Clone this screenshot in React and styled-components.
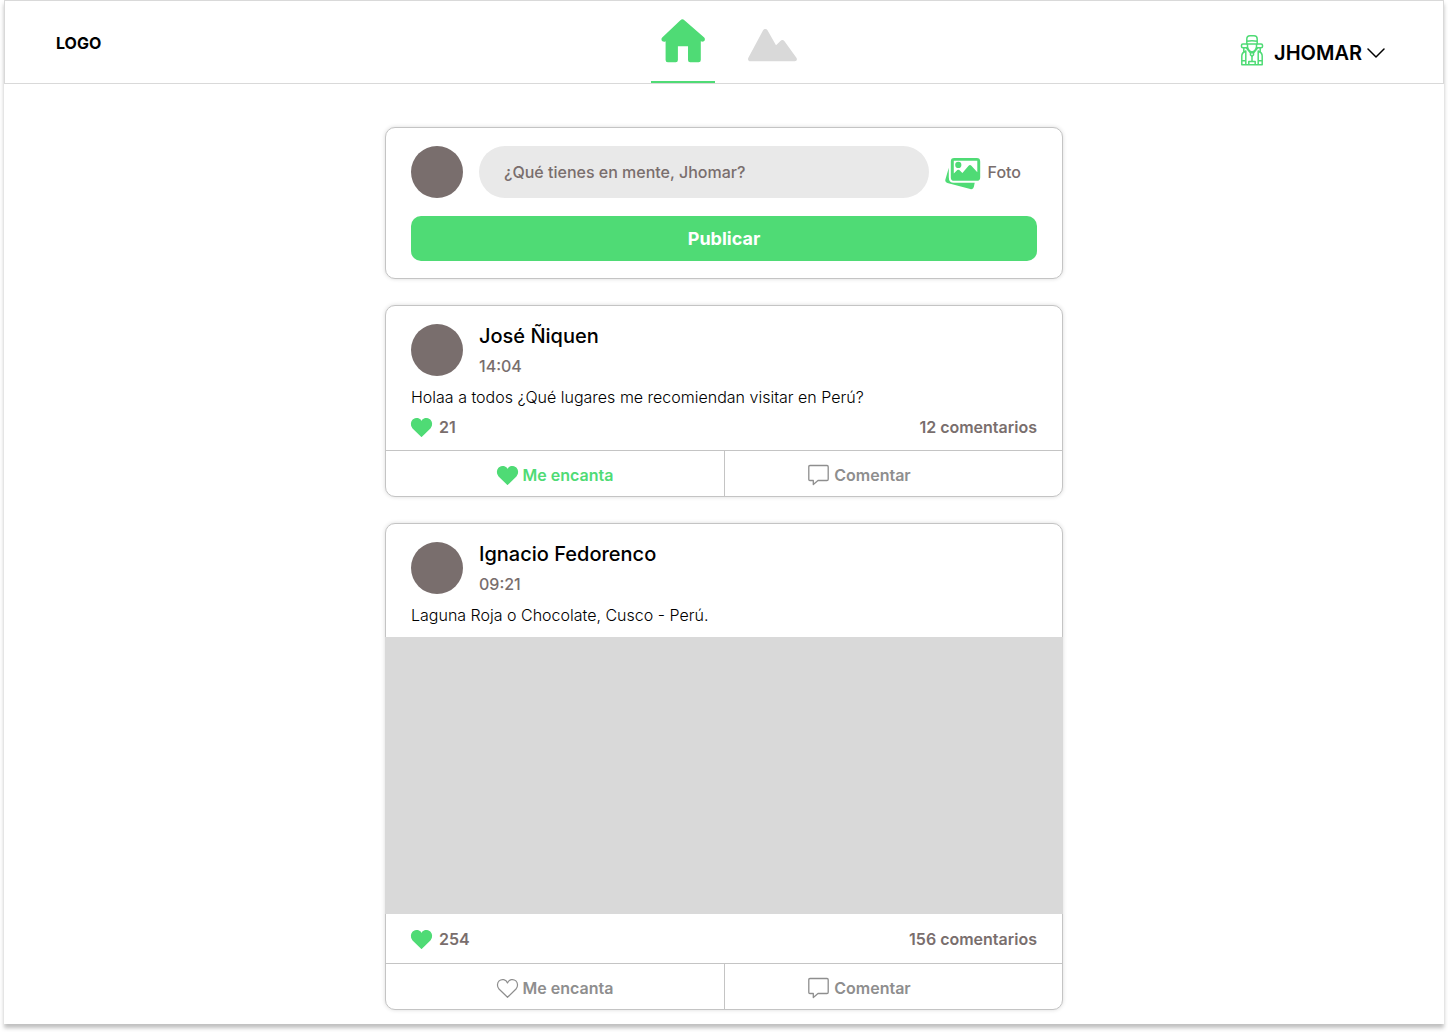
import React from "react";
import styled, { createGlobalStyle } from "styled-components";

const green = "#4fdb75";
const taupe = "#796e6d";
const line = "#c4c4c4";
const soft = "#d9d9d9";

const GlobalStyle = createGlobalStyle`
  *, *::before, *::after { box-sizing: border-box; }
  body { margin: 0; background: #fff; }
  body, button, input { font-family: Inter, "Liberation Sans", sans-serif; }
  h1, h2, p { margin: 0; }
  button { border: 0; background: none; padding: 0; cursor: pointer; }
  svg { display: block; flex: none; }
`;

const Screen = styled.div`
  padding: 0 4px 8px;
`;

const Page = styled.div`
  min-height: calc(100vh - 8px);
  background: #fff;
  box-shadow: 0 4px 4px rgba(0, 0, 0, 0.25);
`;

const Header = styled.header`
  display: grid;
  grid-template-columns: 1fr auto 1fr;
  height: 84px;
  padding: 0 51px;
  border: 1px solid ${soft};
`;

const Logo = styled.a`
  align-self: center;
  justify-self: start;
  padding-top: 2px;
  color: #000;
  font-size: 16px;
  font-weight: 700;
  line-height: 24px;
  text-decoration: none;
`;

const Nav = styled.nav`
  display: flex;
  gap: 33px;
`;

const NavLink = styled.a`
  display: flex;
  justify-content: center;
  padding-top: 16px;
  width: ${(p) => (p.$active ? "64px" : "49px")};
  border-bottom: 2px solid ${(p) => (p.$active ? green : "transparent")};
`;

const MountainSlot = styled.span`
  display: flex;
  align-items: flex-end;
  height: 45px;
`;

const UserMenu = styled.button`
  display: flex;
  align-items: center;
  justify-self: end;
  align-self: end;
  gap: 5px;
  margin: 0 7px 13px 0;
  color: #000;
  font-size: 20px;
  font-weight: 600;
  line-height: 32px;
`;

const UserName = styled.span`
  padding-left: 6px;
`;

const Feed = styled.main`
  display: flex;
  flex-direction: column;
  gap: 26px;
  width: 100%;
  max-width: 678px;
  margin: 0 auto;
  padding: 43px 0 14px;
`;

const Card = styled.article`
  border: 1px solid ${line};
  border-radius: 10px;
  background: #fff;
  box-shadow: 0 0 4px rgba(0, 0, 0, 0.15);
`;

const Composer = styled(Card).attrs({ as: "form" })`
  padding: 18px 25px 17px;
`;

const ComposerRow = styled.div`
  display: flex;
  align-items: center;
  gap: 16px;
  margin-bottom: 18px;
`;

const Avatar = styled.div`
  flex: none;
  width: 52px;
  height: 52px;
  border-radius: 50%;
  background: ${taupe};
`;

const ThoughtInput = styled.input`
  flex: 1;
  min-width: 0;
  height: 52px;
  padding: 0 25px;
  border: 0;
  border-radius: 26px;
  background: #e9e9e9;
  color: ${taupe};
  font-size: 16px;
  font-weight: 500;
  &::placeholder { color: ${taupe}; opacity: 1; }
`;

const PhotoButton = styled.button`
  display: flex;
  align-items: center;
  gap: 7px;
  padding-right: 16px;
  color: ${taupe};
  font-size: 16px;
  font-weight: 500;
`;

const PublishButton = styled.button`
  width: 100%;
  height: 45px;
  border-radius: 10px;
  background: ${green};
  color: #fff;
  font-size: 18px;
  font-weight: 700;
`;

const PostHeader = styled.header`
  display: flex;
  gap: 16px;
  padding: 18px 25px 0;
`;

const Author = styled.h2`
  margin-bottom: 8px;
  color: #000;
  font-size: 20px;
  font-weight: 500;
  line-height: 24px;
`;

const PostTime = styled.time`
  display: block;
  color: ${taupe};
  font-size: 16px;
  font-weight: 500;
  line-height: 20px;
`;

const PostText = styled.p`
  padding: 9px 25px 0;
  color: #000;
  font-size: 16px;
  font-weight: 300;
  line-height: 24px;
`;

const PostPhoto = styled.div`
  height: 277px;
  margin: 10px -1px 0;
  background: ${soft};
`;

const Stats = styled.div`
  display: flex;
  align-items: center;
  justify-content: space-between;
  padding: ${(p) => (p.$spacious ? "13px 25px 12px" : "6px 25px 11px")};
  color: ${taupe};
  font-size: 16px;
  font-weight: 600;
  line-height: 24px;
`;

const Likes = styled.span`
  display: flex;
  align-items: center;
  gap: 7px;
`;

const Actions = styled.footer`
  display: grid;
  grid-template-columns: 1fr 1fr;
  height: 46px;
  border-top: 1px solid ${line};
`;

const Action = styled.button`
  display: flex;
  align-items: center;
  justify-content: center;
  gap: 5px;
  padding-top: 3px;
  color: ${(p) => (p.$active ? green : "#8e8e8e")};
  font-size: 16px;
  font-weight: 600;

  & + & {
    padding-right: 68px;
    border-left: 1px solid ${line};
  }
`;

const HomeIcon = () => (
  <svg width="46" height="46" viewBox="1 0 46 46" fill={green} aria-hidden="true">
    <path d="M21.400 3.200q2-1.800 4 0L45.200 20.400c1.200 1.200.9 3.500-.9 4.100-.8.300-1.500.1-2.500-.3V43q0 2.200-2.200 2.200h-8.400q-2.200 0-2.200-2.200V29.200H18.900V43q0 2.200-2.200 2.200H8.800Q6.600 45.200 6.600 43V24.200c-1 .5-1.700.7-2.500.4-1.800-.6-2.200-2.900-.9-4.200z" />
  </svg>
);

const MountainIcon = () => (
  <svg width="49" height="34" viewBox="0 0 49 34" fill={soft} aria-hidden="true">
    <path d="M15.100 2.300c1-1.800 3.400-1.800 4.400 0L28 17.200l4.400-4.300c1.300-1.200 3-1 4.100.4l11.900 16.500c1.100 1.700.3 3.500-1.800 3.500H2.400c-2 0-3-1.800-1.900-3.700z" />
  </svg>
);

const TravelerIcon = () => (
  <svg width="22" height="35" viewBox="0 0 22 35" fill="none" stroke={green} strokeWidth="1.500" strokeLinejoin="round" strokeLinecap="round" overflow="visible" aria-hidden="true">
    <path d="M5.800 9V4Q5.800.8 9 .8h4q3.200 0 3.200 3.200v5M5.800 6.300Q11 5 16.200 6.300M5.800 9h10.400" />
    <path d="M5.500 9H1.800Q.5 9 .5 10.200v1.400q0 1.200 1.300 1.200h4M16.500 9h3.700q1.300 0 1.300 1.200v1.400q0 1.200-1.300 1.200h-4" />
    <path d="M6.500 9.500v2.300Q7.200 15.800 11 17q3.800-1.200 4.500-5.200V9.500M5.500 13l4.200 5.200M16.500 13l-4.200 5.200M2.800 13v4.500M19.200 13v4.500M9.500 17.800h3V20l-1.500 1.300L9.500 20z" />
    <path d="M4.800 16Q.8 17.500.8 21v8.700h20.400V21q0-3.500-4-5M4.800 16v13.500M17.200 16v13.500M1 25.700h3.800M17.200 25.700H21M7.800 29.500v-3h6.400v3M11 21.300v5" />
  </svg>
);

const ChevronIcon = () => (
  <svg width="18" height="10" viewBox="0 0 18 10" fill="none" stroke="#000" strokeWidth="1.500" strokeLinecap="round" strokeLinejoin="round" aria-hidden="true">
    <path d="m1 1 8 8 8-8" />
  </svg>
);

const PhotoIcon = () => (
  <svg width="36" height="38" viewBox="0 -4 36 38" fill={green} aria-hidden="true">
    <path d="M3.800 10.800v9.500q0 5.500 5 5.500h20.900l-.8 4q-.6 3-3.600 2.200L2.400 26Q-.3 25.200.4 22.400z" />
    <path fillRule="evenodd" d="M9.200 1h22.600q3.400 0 3.400 3.400v16q0 3.400-3.400 3.400H9.200q-3.400 0-3.400-3.400v-16Q5.800 1 9.200 1zM8.800 3.700v12.800l3.500-3.400q1-.9 2 0l3.100 2.900 6.200-7.200q1.400-1.400 2.800 0l5.900 6.400V3.700z" />
    <circle cx="13.300" cy="7.900" r="3.100" />
  </svg>
);

const HeartIcon = ({ filled }) => (
  <svg width="21" height="19" viewBox="0 0 21 19" fill={filled ? green : "none"} stroke={filled ? green : "#8e8e8e"} strokeWidth="1.200" strokeLinejoin="round" overflow="visible" aria-hidden="true">
    <path d="M10.500 18.300 2 10C-.2 7.600.1 3.900 2.100 1.900 4.800-.5 9.100.4 10.500 4 11.900.4 16.200-.5 18.900 1.900c2 2 2.300 5.700.1 8.100z" />
  </svg>
);

const CommentIcon = () => (
  <svg width="21" height="22" viewBox="0 0 21 22" fill="none" stroke="#8e8e8e" strokeWidth="1.300" strokeLinejoin="round" aria-hidden="true">
    <path d="M2 1.500h17q1.200 0 1.200 1.200v12.600q0 1.200-1.200 1.200H10l-4.700 4V16.500H2q-1.200 0-1.200-1.200V2.700Q.8 1.500 2 1.500z" />
  </svg>
);

const posts = [
  { author: "José Ñiquen", time: "14:04", text: "Holaa a todos ¿Qué lugares me recomiendan visitar en Perú?", likes: 21, comments: 12, liked: true, photo: false },
  { author: "Ignacio Fedorenco", time: "09:21", text: "Laguna Roja o Chocolate, Cusco - Perú.", likes: 254, comments: 156, liked: false, photo: true },
];

const Post = ({ post }) => (
  <Card>
    <PostHeader>
      <Avatar />
      <div>
        <Author>{post.author}</Author>
        <PostTime dateTime={post.time}>{post.time}</PostTime>
      </div>
    </PostHeader>
    <PostText>{post.text}</PostText>
    {post.photo && <PostPhoto />}
    <Stats $spacious={post.photo}>
      <Likes><HeartIcon filled />{post.likes}</Likes>
      <span>{post.comments} comentarios</span>
    </Stats>
    <Actions>
      <Action type="button" $active={post.liked} aria-pressed={post.liked}>
        <HeartIcon filled={post.liked} />Me encanta
      </Action>
      <Action type="button"><CommentIcon />Comentar</Action>
    </Actions>
  </Card>
);

export default function App() {
  return (
    <Screen>
      <GlobalStyle />
      <Page>
        <Header>
          <Logo href="#">LOGO</Logo>
          <Nav>
            <NavLink href="#inicio" aria-label="Inicio" aria-current="page" $active><HomeIcon /></NavLink>
            <NavLink href="#lugares" aria-label="Lugares"><MountainSlot><MountainIcon /></MountainSlot></NavLink>
          </Nav>
          <UserMenu type="button">
            <TravelerIcon />
            <UserName>JHOMAR</UserName>
            <ChevronIcon />
          </UserMenu>
        </Header>
        <Feed>
          <Composer onSubmit={(e) => e.preventDefault()}>
            <ComposerRow>
              <Avatar />
              <ThoughtInput type="text" aria-label="¿Qué tienes en mente, Jhomar?" placeholder="¿Qué tienes en mente, Jhomar?" />
              <PhotoButton type="button"><PhotoIcon />Foto</PhotoButton>
            </ComposerRow>
            <PublishButton type="submit">Publicar</PublishButton>
          </Composer>
          {posts.map((post) => <Post key={post.author} post={post} />)}
        </Feed>
      </Page>
    </Screen>
  );
}
